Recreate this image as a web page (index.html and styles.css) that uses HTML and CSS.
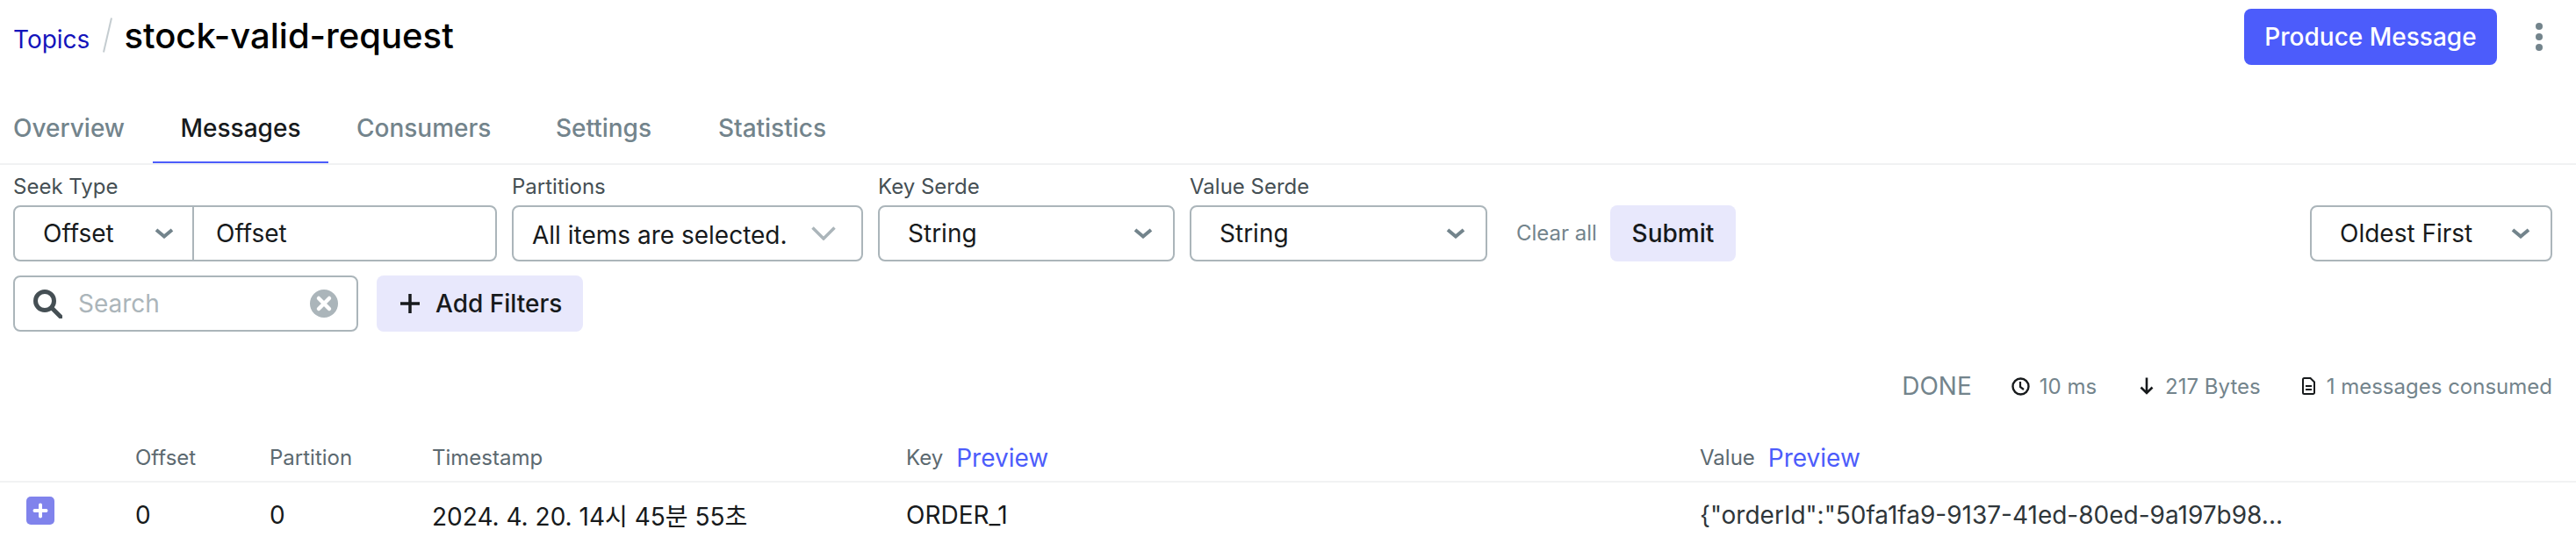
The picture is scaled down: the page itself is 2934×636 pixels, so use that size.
FILE: index.html
```html
<!DOCTYPE html>
<html lang="en">
<head>
<meta charset="utf-8">
<title>stock-valid-request</title>
<link rel="stylesheet" href="styles.css">
</head>
<body>
<header class="head">
  <div class="crumbs">
    <a class="crumb-link">Topics</a>
    <svg class="crumb-sep" width="11" height="40" viewBox="0 0 11 40"><path d="M10 0.5L1 39.5" stroke="#c4ccd0" stroke-width="2" fill="none"/></svg>
    <h1 class="title">stock-valid-request</h1>
  </div>
  <div class="head-actions">
    <button class="btn btn-primary">Produce Message</button>
    <svg class="kebab" width="8" height="32" viewBox="0 0 8 32"><circle cx="4" cy="4" r="4" fill="#73848c"/><circle cx="4" cy="16" r="4" fill="#73848c"/><circle cx="4" cy="28" r="4" fill="#73848c"/></svg>
  </div>
</header>
<nav class="tabs">
  <a class="tab tab-first">Overview</a>
  <a class="tab tab-active">Messages</a>
  <a class="tab">Consumers</a>
  <a class="tab">Settings</a>
  <a class="tab">Statistics</a>
</nav>
<section class="filters">
  <div class="filter-row">
    <div class="field field-seek">
      <label class="label">Seek Type</label>
      <div class="box seek">
        <div class="seek-select">
          <span>Offset</span>
          <svg class="chev" width="22" height="12" viewBox="0 0 22 12"><path d="M2 2L11 9.5L20 2" stroke="#73848c" stroke-width="4" fill="none"/></svg>
        </div>
        <div class="seek-input">Offset</div>
      </div>
    </div>
    <div class="field field-part">
      <label class="label">Partitions</label>
      <div class="box select select-part">
        <span>All items are selected.</span>
        <svg width="28" height="16" viewBox="0 0 28 16"><path d="M1.5 1.5L14 14L26.5 1.5" stroke="#abb5ba" stroke-width="3.5" fill="none"/></svg>
      </div>
    </div>
    <div class="field field-key">
      <label class="label">Key Serde</label>
      <div class="box select">
        <span>String</span>
        <svg class="chev" width="22" height="12" viewBox="0 0 22 12"><path d="M2 2L11 9.5L20 2" stroke="#73848c" stroke-width="4" fill="none"/></svg>
      </div>
    </div>
    <div class="field field-value">
      <label class="label">Value Serde</label>
      <div class="box select">
        <span>String</span>
        <svg class="chev" width="22" height="12" viewBox="0 0 22 12"><path d="M2 2L11 9.5L20 2" stroke="#73848c" stroke-width="4" fill="none"/></svg>
      </div>
    </div>
    <a class="clear-all">Clear all</a>
    <button class="btn btn-soft btn-submit">Submit</button>
    <div class="box select select-order">
      <span>Oldest First</span>
      <svg class="chev" width="22" height="12" viewBox="0 0 22 12"><path d="M2 2L11 9.5L20 2" stroke="#73848c" stroke-width="4" fill="none"/></svg>
    </div>
  </div>
  <div class="filter-row filter-row-second">
    <div class="box search">
      <svg width="34" height="34" viewBox="0 0 34 34"><circle cx="14" cy="14" r="10.5" stroke="#454f54" stroke-width="5" fill="none"/><path d="M22 22L32 32" stroke="#454f54" stroke-width="5" stroke-linecap="round"/></svg>
      <span class="placeholder">Search</span>
      <svg class="search-clear" width="32" height="32" viewBox="0 0 32 32"><circle cx="16" cy="16" r="16" fill="#abb5ba"/><path d="M10 10L22 22M22 10L10 22" stroke="#fff" stroke-width="4.5" stroke-linecap="round"/></svg>
    </div>
    <button class="btn btn-soft btn-add">
      <svg width="22" height="22" viewBox="0 0 22 22"><path d="M11 0V22M0 11H22" stroke="#171a1c" stroke-width="3.5"/></svg>
      <span>Add Filters</span>
    </button>
  </div>
</section>
<div class="stats">
  <span class="stat-done">DONE</span>
  <span class="stat stat-clock">
    <svg width="21" height="21" viewBox="0 0 21 21"><circle cx="10.5" cy="10.5" r="9" stroke="#171a1c" stroke-width="2.4" fill="none"/><path d="M10 5V11L14 14" stroke="#171a1c" stroke-width="2.2" fill="none"/></svg>
    <span>10 ms</span>
  </span>
  <span class="stat stat-arrow">
    <svg width="16" height="20" viewBox="0 0 16 20"><path d="M8 0.5V18M1.5 11.5L8 18L14.5 11.5" stroke="#171a1c" stroke-width="2.6" fill="none"/></svg>
    <span>217 Bytes</span>
  </span>
  <span class="stat stat-doc">
    <svg width="15" height="20" viewBox="0 0 15 20"><path d="M2.5 1H9.5L14 5.5V17.5A1.5 1.5 0 0 1 12.5 19H2.5A1.5 1.5 0 0 1 1 17.5V2.5A1.5 1.5 0 0 1 2.5 1Z" stroke="#171a1c" stroke-width="2" fill="none"/><path d="M4 10H11M4 14H11" stroke="#171a1c" stroke-width="2"/></svg>
    <span>1 messages consumed</span>
  </span>
</div>
<table class="msgs">
  <colgroup>
    <col class="c-expand"><col class="c-offset"><col class="c-partition"><col class="c-time"><col class="c-key"><col class="c-value">
  </colgroup>
  <thead>
    <tr>
      <th></th>
      <th>Offset</th>
      <th>Partition</th>
      <th>Timestamp</th>
      <th><span class="th-flex"><span>Key</span><a class="preview">Preview</a></span></th>
      <th><span class="th-flex"><span>Value</span><a class="preview">Preview</a></span></th>
    </tr>
  </thead>
  <tbody>
    <tr>
      <td class="td-expand"><svg class="expand" width="32" height="32" viewBox="0 0 32 32"><rect width="32" height="32" rx="5" fill="#8083ec"/><path d="M16 9.5V22.5M9.5 16H22.5" stroke="#fff" stroke-width="4" stroke-linecap="round"/></svg></td>
      <td>0</td>
      <td>0</td>
      <td>2024. 4. 20. 14시 45분 55초</td>
      <td>ORDER_1</td>
      <td class="td-value">{"orderId":"50fa1fa9-9137-41ed-80ed-9a197b98...</td>
    </tr>
  </tbody>
</table>
</body>
</html>
```
FILE: styles.css
```css
* { box-sizing: border-box; }
html, body { margin: 0; padding: 0; background: #fff; }
body {
  font-family: Inter, "Noto Sans CJK KR", sans-serif;
  font-size: 28px;
  color: #171a1c;
  overflow: hidden;
}
.head {
  display: flex;
  align-items: flex-start;
  justify-content: space-between;
  padding: 10px 27px 0 15px;
  height: 106px;
}
.crumbs { display: flex; align-items: center; height: 64px; }
.crumb-link { color: #1414bb; font-size: 28px; margin-top: 6px; }
.crumb-sep { margin: -4px 13px 0 15px; }
.title { margin: -2px 0 0; font-size: 40px; line-height: 64px; font-weight: 500; color: #000; }
.head-actions { display: flex; align-items: center; gap: 44px; height: 64px; padding-right: 11px; }
.btn {
  height: 64px;
  border: 0;
  border-radius: 8px;
  font-family: inherit;
  font-size: 28px;
  font-weight: 500;
  padding: 0;
  white-space: nowrap;
}
.btn-primary { background: #4c5cfb; color: #fff; width: 288px; }
.btn-soft { background: #e8e8fc; color: #171a1c; }
.tabs { display: flex; height: 82px; border-bottom: 2px solid #f1f2f3; }
.tab {
  min-width: 192px;
  padding: 0 32px;
  display: flex;
  align-items: center;
  justify-content: center;
  font-weight: 500;
  color: #73848c;
  height: 80px;
}
.tab-first { min-width: 174px; padding: 0 0 0 15px; justify-content: flex-start; }
.tab-active { color: #171a1c; border-bottom: 2px solid #4c5cfb; padding-top: 2px; width: 200px; }
.filters { padding: 10px 27px 0 15px; }
.filter-row { display: flex; align-items: flex-end; gap: 17px; }
.filter-row-second { margin-top: 16px; gap: 21px; }
.field { display: flex; flex-direction: column; }
.label { font-size: 24px; line-height: 30px; margin-bottom: 6px; color: #454f54; }
.field-seek { width: 551px; }
.field-part { width: 400px; }
.field-key { width: 338px; }
.field-value { width: 339px; }
.box { height: 64px; border: 2px solid #abb5ba; border-radius: 8px; background: #fff; }
.seek { display: flex; }
.seek-select {
  width: 204px;
  border-right: 2px solid #abb5ba;
  display: flex;
  align-items: center;
  justify-content: space-between;
  padding: 0 21px 0 32px;
}
.seek-input { padding-left: 25px; line-height: 60px; }
.select { display: flex; align-items: center; justify-content: space-between; padding: 0 23px 0 32px; }
.select-part { padding: 3px 29px 0 21px; }
.select-part svg { margin-top: -3px; }
.select-order { width: 276px; margin-left: auto; }
.clear-all { font-size: 24px; color: #73848c; margin: 0 -2px 0 16px; line-height: 64px; }
.btn-submit { width: 143px; }
.search { width: 393px; display: flex; align-items: center; padding: 0 21px 0 20px; }
.placeholder { color: #abb5ba; margin-left: 18px; flex: 1; }
.btn-add { width: 235px; display: flex; align-items: center; gap: 18px; padding: 0 0 0 27px; }
.stats {
  display: flex;
  align-items: center;
  justify-content: flex-end;
  gap: 47px;
  height: 40px;
  margin-top: 42px;
  padding-right: 27px;
  color: #73848c;
  font-size: 24px;
}
.stat-done { font-size: 28px; margin-right: -2px; }
.stat { display: flex; align-items: center; gap: 13px; }
.stat-clock { gap: 11px; margin-right: 2px; }
.msgs { width: 100%; table-layout: fixed; border-collapse: separate; border-spacing: 0; }
.c-expand { width: 154px; }
.c-offset { width: 153px; }
.c-partition { width: 185px; }
.c-time { width: 540px; }
.c-key { width: 904px; }
.msgs th {
  height: 90px;
  padding: 0 0 10px;
  vertical-align: bottom;
  text-align: left;
  font-size: 24px;
  line-height: 32px;
  font-weight: 400;
  color: #5c6970;
  border-bottom: 2px solid #f1f2f3;
}
.th-flex { display: flex; align-items: center; gap: 15px; }
.preview { font-size: 28px; color: #4c5cfb; }
.msgs td { height: 74px; padding: 0; vertical-align: middle; }
.msgs .td-expand { padding: 16px 0 0 30px; vertical-align: top; }
.expand { display: block; }
.td-value { color: #2f363a; white-space: nowrap; }
```
